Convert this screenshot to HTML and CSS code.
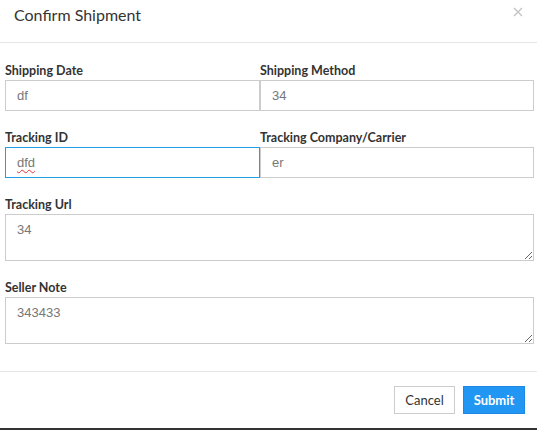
FILE: index.html
```html
<!DOCTYPE html>
<html>
<head>
<meta charset="utf-8">
<link rel="stylesheet" href="styles.css">
</head>
<body>
<div class="modal">
  <div class="modal-header">
    <h4 class="modal-title">Confirm Shipment</h4>
    <button class="close" type="button" aria-label="Close">
      <svg width="10" height="10" viewBox="0 0 10 10"><path d="M1 1L9 9M9 1L1 9" stroke="#c4c4c4" stroke-width="1.4" fill="none"/></svg>
    </button>
  </div>
  <div class="modal-body">
    <div class="row">
      <div class="field">
        <label>Shipping Date</label>
        <input class="control" type="text" value="df">
      </div>
      <div class="field">
        <label>Shipping Method</label>
        <input class="control" type="text" value="34">
      </div>
    </div>
    <div class="row">
      <div class="field">
        <label>Tracking ID</label>
        <div class="control focused"><span class="misspelled">dfd</span></div>
      </div>
      <div class="field">
        <label>Tracking Company/Carrier</label>
        <input class="control" type="text" value="er">
      </div>
    </div>
    <div class="field">
      <label>Tracking Url</label>
      <textarea class="control area">34</textarea>
    </div>
    <div class="field">
      <label>Seller Note</label>
      <textarea class="control area">343433</textarea>
    </div>
  </div>
  <div class="modal-footer">
    <button class="btn btn-default" type="button">Cancel</button>
    <button class="btn btn-primary" type="button">Submit</button>
  </div>
</div>
<div class="page-edge"></div>
</body>
</html>
```
FILE: styles.css
```css
* { box-sizing: border-box; }
html, body { margin: 0; padding: 0; background: #fff; }
body { font-family: Lato, "Open Sans", sans-serif; color: #333; width: 537px; height: 430px; overflow: hidden; }
.modal { background: #fff; }
.modal-header {
  height: 43px;
  border-bottom: 1px solid #e5e5e5;
  display: flex;
  align-items: flex-start;
  justify-content: space-between;
  padding: 0 14px 0 14px;
}
.modal-title {
  margin: 0;
  padding-top: 5px;
  font-size: 16px;
  font-weight: 400;
  line-height: 20px;
  color: #333;
}
.close {
  border: 0;
  background: none;
  padding: 0;
  margin-top: 7px;
  width: 10px;
  height: 10px;
  display: block;
  cursor: pointer;
}
.close svg { display: block; }
.modal-body {
  padding: 19px 3px 27px 5px;
}
.row {
  display: grid;
  grid-template-columns: 255px 1fr;
}
.field { margin-bottom: 18px; }
.modal-body > .field:last-child { margin-bottom: 0; }
label {
  display: block;
  font-size: 12.5px;
  font-weight: 700;
  line-height: 18px;
  color: #333;
}
.control {
  display: block;
  width: 100%;
  height: 31px;
  margin: 0;
  border: 1px solid #ccc;
  border-radius: 0;
  padding: 0 11px;
  font-family: "Liberation Sans", Arial, sans-serif;
  font-size: 13px;
  line-height: 29px;
  color: #777;
  background: #fff;
  outline: none;
}
.control.focused {
  border-color: #1ea0e6;
}
.misspelled {
  text-decoration: underline wavy #e03030;
  text-decoration-thickness: 1px;
  text-underline-offset: 2px;
}
.area {
  height: 47px;
  padding: 7px 11px;
  line-height: 15px;
  resize: vertical;
}
.modal-footer {
  border-top: 1px solid #e5e5e5;
  display: flex;
  justify-content: flex-end;
  gap: 8px;
  padding: 14px 12px 14px 0;
}
.btn {
  height: 28px;
  font-family: Lato, sans-serif;
  font-size: 13px;
  border-radius: 0;
  padding: 0;
  cursor: pointer;
}
.btn-default {
  width: 61px;
  background: #fff;
  border: 1px solid #ccc;
  color: #333;
}
.btn-primary {
  width: 62px;
  background: #2196f3;
  border: 1px solid #1e88e5;
  color: #fff;
  font-weight: 700;
}
.page-edge {
  height: 2px;
  background: #333;
}
```
